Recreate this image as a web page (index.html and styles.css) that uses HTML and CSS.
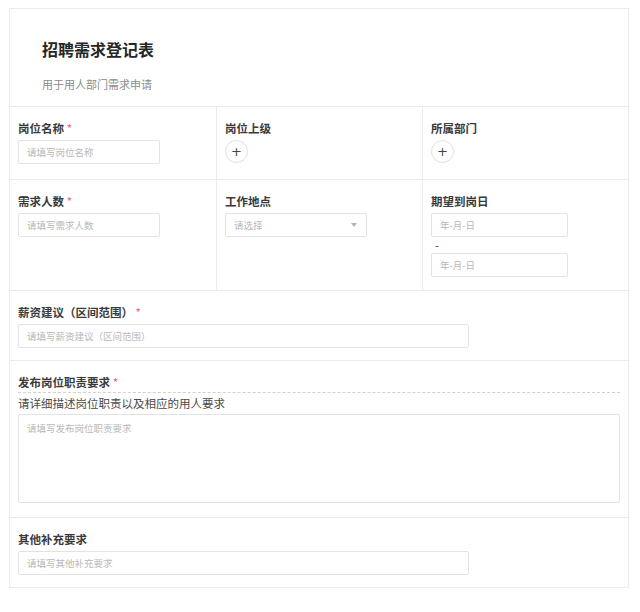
FILE: index.html
```html
<!DOCTYPE html>
<html lang="zh">
<head>
<meta charset="utf-8">
<title>招聘需求登记表</title>
<link rel="stylesheet" href="styles.css">
</head>
<body>
<div class="form">
  <div class="header">
    <h1 class="title">招聘需求登记表</h1>
    <p class="subtitle">用于用人部门需求申请</p>
  </div>

  <div class="row grid3 pb15">
    <div class="cell">
      <div class="label">岗位名称 <span class="req">*</span></div>
      <input class="input short" placeholder="请填写岗位名称">
    </div>
    <div class="cell">
      <div class="label">岗位上级</div>
      <button class="add">+</button>
    </div>
    <div class="cell">
      <div class="label">所属部门</div>
      <button class="add">+</button>
    </div>
  </div>

  <div class="row grid3 pb13">
    <div class="cell">
      <div class="label">需求人数 <span class="req">*</span></div>
      <input class="input short" placeholder="请填写需求人数">
    </div>
    <div class="cell">
      <div class="label">工作地点</div>
      <div class="select short"><span>请选择</span><span class="caret"></span></div>
    </div>
    <div class="cell">
      <div class="label">期望到岗日</div>
      <input class="input date" placeholder="年-月-日">
      <div class="dash">-</div>
      <input class="input date" placeholder="年-月-日">
    </div>
  </div>

  <div class="row pb12">
    <div class="cell">
      <div class="label">薪资建议（区间范围） <span class="req">*</span></div>
      <input class="input wide" placeholder="请填写薪资建议（区间范围）">
    </div>
  </div>

  <div class="row">
    <div class="cell">
      <div class="label dashed">发布岗位职责要求 <span class="req">*</span></div>
      <div class="desc">请详细描述岗位职责以及相应的用人要求</div>
      <textarea class="textarea" placeholder="请填写发布岗位职责要求"></textarea>
    </div>
  </div>

  <div class="row last pb12">
    <div class="cell">
      <div class="label">其他补充要求</div>
      <input class="input wide" placeholder="请填写其他补充要求">
    </div>
  </div>
</div>
</body>
</html>
```

FILE: styles.css
```css
* { box-sizing: border-box; }

body {
  margin: 0;
  background: #fff;
  font-family: "Noto Sans CJK SC", "Noto Sans", "Liberation Sans", sans-serif;
  color: #333;
}

.form {
  margin: 8px 11px 0 9px;
  width: 620px;
  border: 1px solid #ebebeb;
}

.header {
  padding: 29px 32px 14px;
  border-bottom: 1px solid #ebebeb;
}

.title {
  margin: 0;
  font-size: 16px;
  line-height: 22px;
  font-weight: 700;
  color: #262626;
}

.subtitle {
  margin: 16px 0 0;
  font-size: 11px;
  line-height: 16px;
  color: #8c8c8c;
}

.row {
  border-bottom: 1px solid #ebebeb;
}

.row.last {
  border-bottom: none;
}

.grid3 {
  display: grid;
  grid-template-columns: 206px 206px 206px;
}

.grid3 .cell + .cell {
  border-left: 1px solid #ebebeb;
}

.cell {
  padding: 13px 8px 14px;
  display: flex;
  flex-direction: column;
  align-items: flex-start;
}

.pb15 .cell { padding-bottom: 15px; }
.pb13 .cell { padding-bottom: 13px; }
.pb12 .cell { padding-bottom: 12px; }

.label {
  font-size: 11.5px;
  line-height: 16px;
  font-weight: 700;
  color: #3a3a3a;
  margin-bottom: 4px;
  white-space: pre;
}

.label.dashed {
  align-self: stretch;
  padding-bottom: 2px;
  border-bottom: 1px dashed #d0d0d0;
  margin-bottom: 2px;
}

.req {
  color: #f0625f;
  font-weight: 400;
}

.input,
.select,
.textarea {
  height: 24px;
  border: 1px solid #e3e3e3;
  border-radius: 2px;
  padding: 0 8px;
  font-family: inherit;
  font-size: 9.5px;
  color: #333;
  background: #fff;
  outline: none;
}

.input::placeholder,
.textarea::placeholder {
  color: #b8b8b8;
}

.short { width: 142px; }
.date { width: 137px; }
.wide { width: 451px; }

.select {
  display: flex;
  align-items: center;
  justify-content: space-between;
  color: #b8b8b8;
  padding-right: 9px;
}

.caret {
  width: 0;
  height: 0;
  border-left: 3.5px solid transparent;
  border-right: 3.5px solid transparent;
  border-top: 4px solid #b5b5b5;
}

.dash {
  font-size: 11px;
  line-height: 16px;
  color: #333;
  padding-left: 4px;
}

.add {
  width: 23px;
  height: 23px;
  border: 1px solid #e0e0e0;
  border-radius: 50%;
  background: #fff;
  padding: 0;
  font-family: "DejaVu Sans", sans-serif;
  font-size: 13px;
  line-height: 20px;
  color: #444;
}

.desc {
  font-size: 11.5px;
  line-height: 16px;
  color: #4a4a4a;
  margin-bottom: 3px;
}

.textarea {
  width: 602px;
  height: 89px;
  padding: 6px 8px;
  resize: none;
  display: block;
}
```
